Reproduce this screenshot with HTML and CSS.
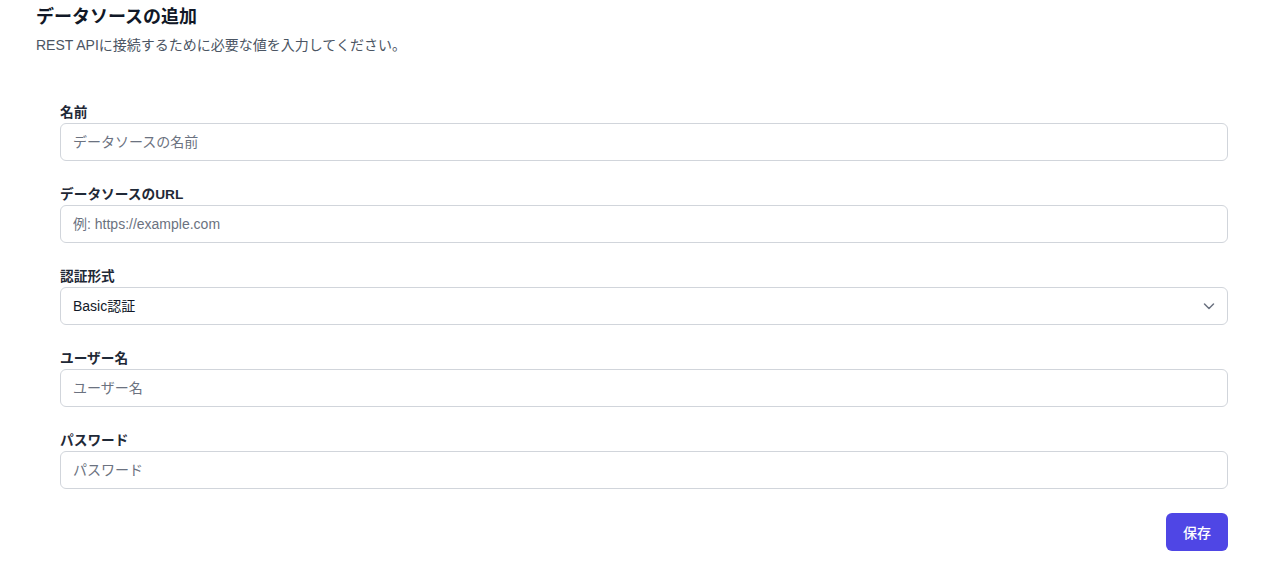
FILE: index.html
```html
<!DOCTYPE html>
<html lang="ja">
<head>
    <meta charset="UTF-8">
    <meta name="viewport" content="width=device-width, initial-scale=1.0">
    <title>データソースの追加</title>
    <link rel="stylesheet" href="styles.css">
</head>
<body>
    <div class="page">
        <h1 class="title">データソースの追加</h1>
        <p class="subtitle">REST APIに接続するために必要な値を入力してください。</p>

        <form class="source-form">
            <div class="field">
                <label for="name">名前</label>
                <input type="text" id="name" placeholder="データソースの名前">
            </div>

            <div class="field">
                <label for="url">データソースのURL</label>
                <input type="text" id="url" placeholder="例: https://example.com">
            </div>

            <div class="field">
                <label for="auth">認証形式</label>
                <div class="select-wrap">
                    <select id="auth">
                        <option>Basic認証</option>
                        <option>Bearerトークン</option>
                        <option>なし</option>
                    </select>
                    <svg class="chevron" width="20" height="20" viewBox="0 0 20 20" fill="none">
                        <path d="M5.5 8l4.5 4.5 4.5-4.5" stroke="#6b7280" stroke-width="1.5" stroke-linecap="round" stroke-linejoin="round"/>
                    </svg>
                </div>
            </div>

            <div class="field">
                <label for="username">ユーザー名</label>
                <input type="text" id="username" placeholder="ユーザー名">
            </div>

            <div class="field">
                <label for="password">パスワード</label>
                <input type="password" id="password" placeholder="パスワード">
            </div>

            <div class="actions">
                <button type="button" class="save-button">保存</button>
            </div>
        </form>
    </div>
</body>
</html>
```

FILE: styles.css
```css
body {
    margin: 0;
    padding: 0;
    background-color: #fff;
    font-family: "Liberation Sans", "Noto Sans CJK JP", sans-serif;
    color: #111827;
}

.page {
    padding: 3px 31px 0 36px;
}

.title {
    margin: 0;
    font-size: 18px;
    line-height: 28px;
    font-weight: 700;
    color: #111827;
}

.subtitle {
    margin: 4px 0 0;
    font-size: 14px;
    line-height: 20px;
    color: #4b5563;
}

.source-form {
    padding: 48px 24px 0;
    display: flex;
    flex-direction: column;
    gap: 24px;
}

.field {
    display: flex;
    flex-direction: column;
}

.field label {
    font-size: 13.7px;
    line-height: 20px;
    font-weight: 700;
    color: #1f2937;
}

.field input,
.field select {
    box-sizing: border-box;
    width: 100%;
    height: 38px;
    padding: 0 12px;
    border: 1px solid #d1d5db;
    border-radius: 6px;
    background-color: #fff;
    font-family: inherit;
    font-size: 14px;
    color: #111827;
    outline: none;
}

.field input::placeholder {
    color: #6b7280;
}

.select-wrap {
    position: relative;
}

.field select {
    appearance: none;
    -webkit-appearance: none;
}

.chevron {
    position: absolute;
    right: 9px;
    top: 9px;
    pointer-events: none;
}

.actions {
    display: flex;
    justify-content: flex-end;
}

.save-button {
    height: 38px;
    padding: 0 17px;
    border: none;
    border-radius: 6px;
    background-color: #4f46e5;
    color: #fff;
    font-family: inherit;
    font-size: 14px;
    font-weight: 500;
    cursor: pointer;
}
```
